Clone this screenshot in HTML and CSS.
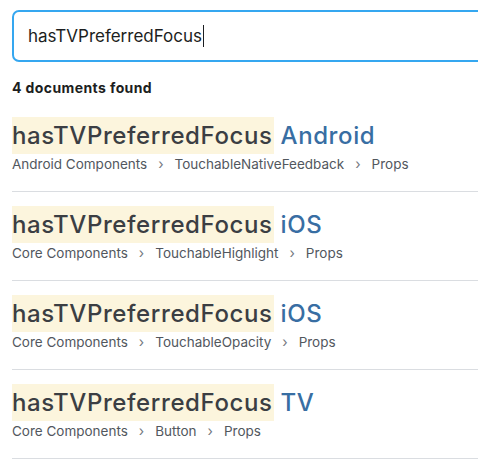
FILE: index.html
```html
<!DOCTYPE html>
<html lang="en">
<head>
    <meta charset="UTF-8">
    <meta name="viewport" content="width=device-width, initial-scale=1.0">
    <title>Search</title>
    <link rel="stylesheet" href="styles.css">
</head>
<body>
<main class="search-page">
	<!-- search box -->
	<div class="search-box">
		<span class="search-text">hasTVPreferredFocus</span><span class="caret"></span>
	</div>
	<h4 class="found">4 documents found</h4>
	<!-- results -->
	<ul class="results">
		<li class="result">
			<div class="result-title"><mark>hasTVPreferredFocus</mark> <span class="tag">Android</span></div>
			<div class="crumbs"><span>Android Components</span><i>›</i><span>TouchableNativeFeedback</span><i>›</i><span>Props</span></div>
		</li>
		<li class="result">
			<div class="result-title"><mark>hasTVPreferredFocus</mark> <span class="tag">iOS</span></div>
			<div class="crumbs"><span>Core Components</span><i>›</i><span>TouchableHighlight</span><i>›</i><span>Props</span></div>
		</li>
		<li class="result">
			<div class="result-title"><mark>hasTVPreferredFocus</mark> <span class="tag">iOS</span></div>
			<div class="crumbs"><span>Core Components</span><i>›</i><span>TouchableOpacity</span><i>›</i><span>Props</span></div>
		</li>
		<li class="result">
			<div class="result-title"><mark>hasTVPreferredFocus</mark> <span class="tag">TV</span></div>
			<div class="crumbs"><span>Core Components</span><i>›</i><span>Button</span><i>›</i><span>Props</span></div>
		</li>
	</ul>
</main>
</body>
</html>
```

FILE: styles.css
```css
* { margin: 0; padding: 0; box-sizing: border-box; list-style: none; }
body { background: #ffffff; font-family: Inter, "Open Sans", sans-serif; color: #1c1e21; overflow: hidden; }
.search-page { padding: 10px 0 0 12px; width: 478px; overflow: hidden; }

.search-box { width: 520px; height: 52px; border: 2px solid #35a7f0; border-radius: 7px; padding: 0 14px; display: flex; align-items: center; }
.search-text { font-size: 17px; color: #1c1e21; letter-spacing: 0; }
.caret { width: 1px; height: 22px; background: #1c1e21; margin-left: 1px; }

.found { font-size: 14px; font-weight: 700; line-height: 20px; margin-top: 16px; color: #1c1e21; letter-spacing: 0.4px; }

.results { margin-top: 16px; }
.result { padding-top: 3px; padding-bottom: 17px; border-bottom: 1px solid #dadde1; }
.result + .result { padding-top: 14px; }
.result-title { font-size: 24px; font-weight: 500; letter-spacing: 0.6px; line-height: 37px; height: 37px; white-space: nowrap; }
.result-title mark { display: inline-block; background: #fcf5dd; color: #3b3e43; padding-right: 1px; }
.tag { color: #386ea3; }
.crumbs { font-size: 13.5px; line-height: 20px; color: #52575e; display: flex; align-items: center; }
.crumbs i { font-style: normal; color: #74787e; margin: 0 11px; font-size: 14px; }
```
